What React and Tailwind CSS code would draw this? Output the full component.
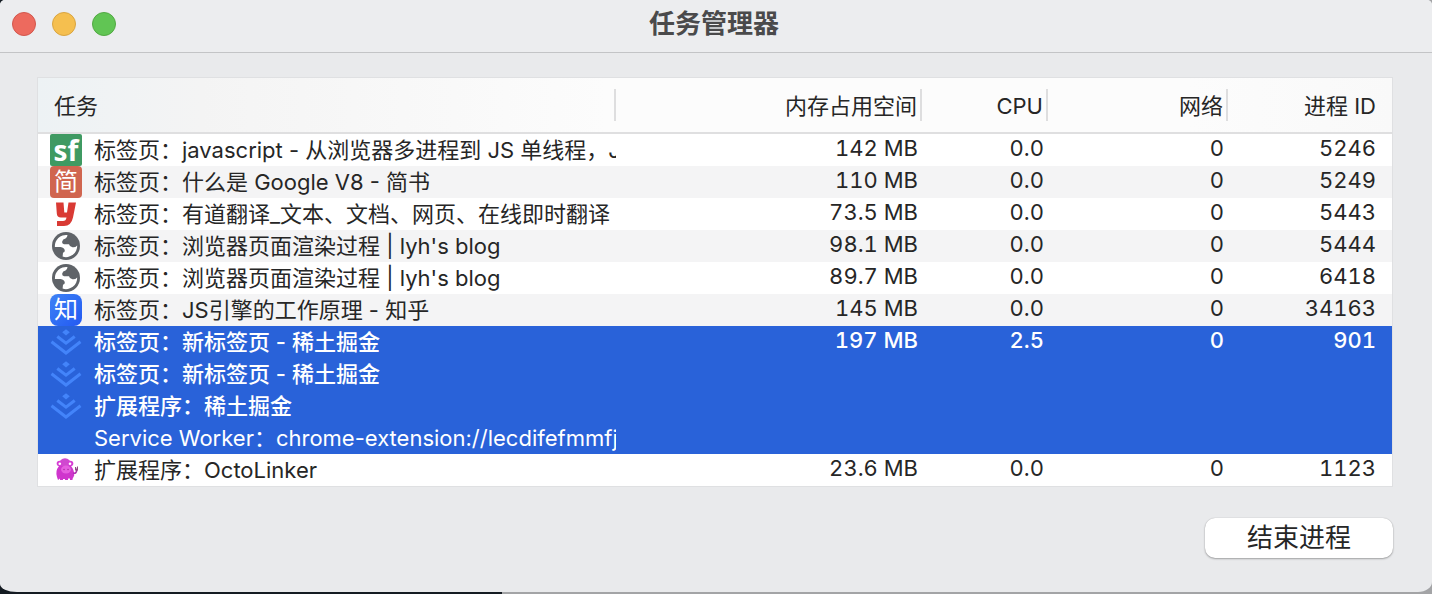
const tasks = [
  { id: 1, icon: "sf", name: "标签页：javascript - 从浏览器多进程到 JS 单线程，JS", mem: "142 MB", cpu: "0.0", net: "0", pid: "5246" },
  { id: 2, icon: "jianshu", name: "标签页：什么是 Google V8 - 简书", mem: "110 MB", cpu: "0.0", net: "0", pid: "5249" },
  { id: 3, icon: "youdao", name: "标签页：有道翻译_文本、文档、网页、在线即时翻译", mem: "73.5 MB", cpu: "0.0", net: "0", pid: "5443" },
  { id: 4, icon: "globe", name: "标签页：浏览器页面渲染过程 | lyh's blog", mem: "98.1 MB", cpu: "0.0", net: "0", pid: "5444" },
  { id: 5, icon: "globe", name: "标签页：浏览器页面渲染过程 | lyh's blog", mem: "89.7 MB", cpu: "0.0", net: "0", pid: "6418" },
  { id: 6, icon: "zhihu", name: "标签页：JS引擎的工作原理 - 知乎", mem: "145 MB", cpu: "0.0", net: "0", pid: "34163" },
  { id: 7, icon: "juejin", name: "标签页：新标签页 - 稀土掘金", mem: "197 MB", cpu: "2.5", net: "0", pid: "901", selected: true },
  { id: 8, icon: "juejin", name: "标签页：新标签页 - 稀土掘金", selected: true },
  { id: 9, icon: "juejin", name: "扩展程序：稀土掘金", selected: true },
  { id: 10, icon: null, name: "Service Worker：chrome-extension://lecdifefmmfj", selected: true, worker: true },
  { id: 11, icon: "octo", name: "扩展程序：OctoLinker", mem: "23.6 MB", cpu: "0.0", net: "0", pid: "1123" },
];

function TaskIcon({ kind }) {
  switch (kind) {
    case "sf":
      return (
        <span className="flex size-8 shrink-0 items-center justify-center rounded-xs bg-[#3f9a62] font-['Open_Sans',sans-serif] text-[28px] leading-8 font-bold text-white">
          sf
        </span>
      );
    case "jianshu":
      return (
        <span className="flex size-8 shrink-0 items-center justify-center rounded-sm bg-[#d0654f] text-2xl leading-8 text-white">
          简
        </span>
      );
    case "zhihu":
      return (
        <span className="flex size-8 shrink-0 items-center justify-center rounded-lg bg-linear-to-br from-[#3f82f5] to-[#2458f2] text-2xl leading-8 text-white">
          知
        </span>
      );
    case "youdao":
      return (
        <svg viewBox="0 0 32 32" className="size-8 shrink-0" aria-hidden="true">
          <path
            fill="#d93a34"
            d="M6 4.500h7.500l.8 10h2.700l1.500-10H26l-3 15q-1.800 8.500-9 8.500H7v-5h6q3 0 3.500-3.500H11q-4 0-4.200-4z"
          />
        </svg>
      );
    case "globe":
      return (
        <svg viewBox="0 0 32 32" className="size-8 shrink-0" aria-hidden="true">
          <circle cx="16" cy="16" r="14" fill="#5f6368" />
          <path
            fill="#fff"
            d="M17.500 5A11.200 11.200 0 0 0 4.900 17H10.500q4 .5 4.300 3.800 0 1.700-1.800 2l-.4 3.800A11.200 11.200 0 0 0 27.200 15.500q-2 2.200-4.700 1.800-3-.4-3.500-3.100H14q-2.300-.5-1.800-2.800.5-2.400 3.300-2.900 1.800-.5 2-3.500z"
          />
        </svg>
      );
    case "juejin":
      return (
        <svg viewBox="0 0 32 32" className="size-8 shrink-0" fill="none" stroke="#4384fa" strokeWidth="3" aria-hidden="true">
          <path fill="#4384fa" stroke="none" d="M16 3.200l3.800 3.100-3.800 3.100-3.800-3.100z" />
          <path d="M7.300 10.500 16 17.200l8.700-6.700M1.500 15.800 16 27l14.500-11.200" />
        </svg>
      );
    case "octo":
      return (
        <svg viewBox="0 0 32 32" className="size-8 shrink-0" aria-hidden="true">
          <ellipse cx="15" cy="10" rx="6" ry="5.800" fill="#cf49cf" />
          <circle cx="9.500" cy="9.500" r="2.800" fill="#d63fd4" />
          <circle cx="20.500" cy="9.500" r="2.800" fill="#d63fd4" />
          <path fill="#cf35cd" d="M9 12h12q3.500 4 3.200 9.500L22.500 25v1H20v-1.500h-2V26h-3v-1h-2v1h-3v-1.500L8 26l-1-3q-2-6 2-11z" />
          <circle cx="9.800" cy="9.800" r="1.300" fill="#fff" />
          <circle cx="20" cy="9.800" r="1.300" fill="#fff" />
          <ellipse cx="16" cy="15.500" rx="5" ry="4" fill="#e55fe0" />
          <path d="M14 15.500h.1M18 15.500h.1" stroke="#a8289f" strokeWidth="1.400" strokeLinecap="round" />
          <path d="M23 19q3.500 1 3.800-3" fill="none" stroke="#b22fb2" strokeWidth="1.600" />
          <path fill="#8f4a86" d="M25 13h1.200v1.500h.8v-2h1v3.500l-1.400 1.500-1.600-1.500z" />
        </svg>
      );
    default:
      return <span className="size-8 shrink-0" />;
  }
}

function HeaderCell({ children, divider }) {
  return (
    <th scope="col" className="p-0 font-normal">
      <div
        className={
          divider
            ? "flex h-8 items-center justify-end border-r-2 border-[#dededf] pt-0.5 pr-[3px]"
            : "flex h-8 items-center justify-end pt-0.5 pr-4"
        }
      >
        {children}
      </div>
    </th>
  );
}

function TaskRow({ task }) {
  const tone = task.selected ? "bg-[#2962d9] text-white" : "odd:bg-white even:bg-[#f4f4f5]";
  const weight = task.selected && !task.worker ? "font-medium" : "font-normal";
  return (
    <tr className={`h-8 ${tone} ${weight}`} aria-selected={task.selected ? true : undefined}>
      <td className="p-0">
        <div className="flex h-8 items-center gap-3 overflow-hidden pl-3">
          <TaskIcon kind={task.icon} />
          <span className="min-w-0 flex-1 overflow-hidden leading-8 whitespace-nowrap">{task.name}</span>
        </div>
      </td>
      <td className="p-0 pr-1 pb-1 text-right leading-7 tabular-nums">{task.mem}</td>
      <td className="p-0 pr-1 pb-1 text-right leading-7 tabular-nums">{task.cpu}</td>
      <td className="p-0 pr-1 pb-1 text-right leading-7 tabular-nums">{task.net}</td>
      <td className="p-0 pr-4 pb-1 text-right leading-7 tabular-nums">{task.pid}</td>
    </tr>
  );
}

export default function App() {
  return (
    <div className="min-h-screen bg-[linear-gradient(to_right,#141b22_502px,#a3a4a6_502px)] font-[Inter,'Noto_Sans_CJK_SC',sans-serif] text-[#262626]">
      <main className="rounded-t-[5px] rounded-br-[14px_10px] rounded-bl-[17px_8px] bg-[#e9eaec]">
        <header className="grid h-[53px] grid-cols-[1fr_auto_1fr] items-center rounded-t-[5px] border-b border-[#c3c4c6] bg-[#ecedef] pr-4 pb-1 pl-3">
          <div className="flex gap-4">
            <button type="button" aria-label="关闭" className="size-6 rounded-full border border-[#d2574d] bg-[#ed6a5e]" />
            <button type="button" aria-label="最小化" className="size-6 rounded-full border border-[#d9a541] bg-[#f5bf4f]" />
            <button type="button" aria-label="缩放" className="size-6 rounded-full border border-[#52a943] bg-[#61c554]" />
          </div>
          <h1 className="text-[26px] leading-8 font-bold text-[#4a4a4b]">任务管理器</h1>
        </header>

        <div className="pt-6 pr-[39px] pb-[34px] pl-[37px]">
          <div className="border border-[#dfe0e2] bg-white">
            <table className="w-full table-fixed border-collapse text-[22px]">
              <colgroup>
                <col />
                <col className="w-[306px]" />
                <col className="w-[126px]" />
                <col className="w-[180px]" />
                <col className="w-[164px]" />
              </colgroup>
              <thead>
                <tr className="h-[55px] border-b-2 border-[#dfdfe0] bg-[linear-gradient(to_right,#edf2f4,#f4f4f4_12%,#fcfcfc_42%,#fcfcfc_85%,#f9f9f9)]">
                  <th scope="col" className="p-0 font-normal">
                    <div className="flex h-8 items-center border-r-2 border-[#dededf] pt-0.5 pl-4">任务</div>
                  </th>
                  <HeaderCell divider>内存占用空间</HeaderCell>
                  <HeaderCell divider>CPU</HeaderCell>
                  <HeaderCell divider>网络</HeaderCell>
                  <HeaderCell>进程 ID</HeaderCell>
                </tr>
              </thead>
              <tbody>
                {tasks.map((task) => (
                  <TaskRow key={task.id} task={task} />
                ))}
              </tbody>
            </table>
          </div>
          <div className="mt-[31px] flex justify-end">
            <button
              type="button"
              className="h-10 w-[188px] rounded-[10px] bg-white text-[26px] leading-10 shadow-[0_1px_2px_rgba(0,0,0,0.3),0_0_1px_rgba(0,0,0,0.25)]"
            >
              结束进程
            </button>
          </div>
        </div>
      </main>
    </div>
  );
}
